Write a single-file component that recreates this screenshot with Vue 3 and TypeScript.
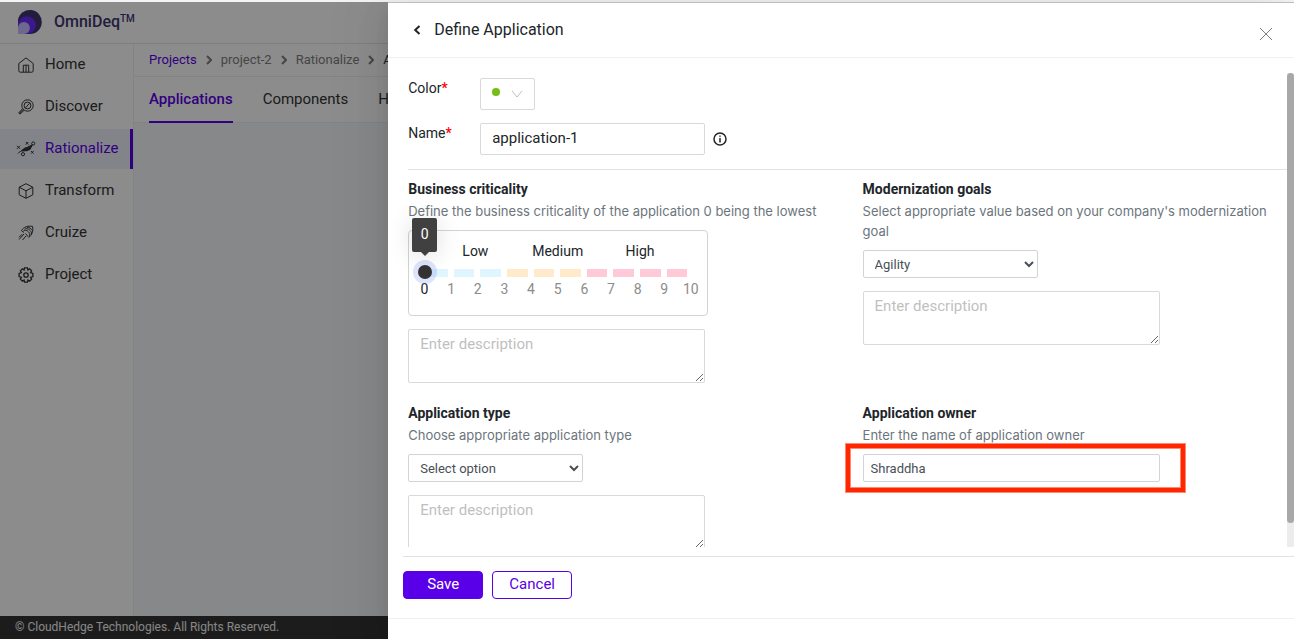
<script setup lang="ts">
import { ref } from 'vue'

interface NavItem {
  label: string
  icon: string
}

const navItems: NavItem[] = [
  { label: 'Home', icon: 'home' },
  { label: 'Discover', icon: 'discover' },
  { label: 'Rationalize', icon: 'rationalize' },
  { label: 'Transform', icon: 'transform' },
  { label: 'Cruize', icon: 'cruize' },
  { label: 'Project', icon: 'project' },
]
const activeNav = 'Rationalize'
const tabs: string[] = ['Applications', 'Components', 'Hosts']

const name = ref('application-1')
const criticality = ref(0)
const criticalityNote = ref('')
const goal = ref('Agility')
const goalNote = ref('')
const appType = ref('')
const appTypeNote = ref('')
const owner = ref('Shraddha')

const segments: string[] = ['low', 'low', 'low', 'medium', 'medium', 'medium', 'high', 'high', 'high', 'high']
const marks: number[] = Array.from({ length: 11 }, (_, i) => i)
</script>

<template>
  <div class="window">
    <div class="shell">
      <header class="topbar">
        <svg class="logo" viewBox="0 0 25 26" aria-hidden="true">
          <path d="M0 13V10A12.500 12.500 0 1 1 12.500 25H8z" fill="#3e3670" />
          <path d="M0 25V16A9.300 9.300 0 1 1 9.300 25z" fill="#6c2cff" />
          <path d="M0 25V19A6.200 6.200 0 1 1 6.200 25z" fill="#c6bfff" />
        </svg>
        <span class="brand">OmniDeq<sup>TM</sup></span>
      </header>

      <div class="workspace">
        <nav class="sidebar" aria-label="Main">
          <a
            v-for="item in navItems"
            :key="item.label"
            href="#"
            class="nav-item"
            :class="{ active: item.label === activeNav }"
          >
            <svg v-if="item.icon === 'home'" class="nav-icon" viewBox="0 0 16 16">
              <path d="M.8 6.500 8 .9l7.200 5.600v7.200a1.500 1.500 0 0 1-1.500 1.500H2.300a1.500 1.500 0 0 1-1.500-1.500zM5.300 15V8.200h5.400V15M8 8.200V15" />
            </svg>
            <svg v-else-if="item.icon === 'discover'" class="nav-icon" viewBox="0 0 16 16">
              <circle cx="9.500" cy="6.500" r="5.700" />
              <circle cx="9.500" cy="6.500" r="3.400" />
              <path d="m7.500 8.800 4-4.500M5.300 10.300l-4 4.200M4.400 9.800l-3.600 4 1.200 1.300 4-3.700" />
            </svg>
            <svg v-else-if="item.icon === 'rationalize'" class="nav-icon wide" viewBox="0 0 20 16">
              <path d="m1 4.800 3 3m0-3-3 3M9.800 1l2.600 2.600m0-2.600L9.800 3.600M15 10l2.600 2.600m0-2.600L15 12.600M2 12.500c3-4 6-1.500 9.500-4" />
              <path d="M5.500 9.500 9 7l2.500-.8 4.800-2.400-2.200 4.600-3.500 1.400z" fill="currentColor" />
              <circle cx="17.200" cy="2.500" r="1.600" />
              <circle cx="7" cy="13.200" r="1.600" />
            </svg>
            <svg v-else-if="item.icon === 'transform'" class="nav-icon" viewBox="0 0 16 16">
              <path d="M8 .7 14.800 4.200v7.600L8 15.300l-6.800-3.500V4.200zM1.200 4.200 8 7.800l6.800-3.600M8 7.800v7.500" />
            </svg>
            <svg v-else-if="item.icon === 'cruize'" class="nav-icon" viewBox="0 0 16 16">
              <path d="M3.400 5.400C6 2 9.500.6 14.500 1.400c1 4.300-.4 8.600-3.900 11.200M5 6.500C7 4.500 9 5 11 7.500c.8 1 .7 2.600.2 3.800M6.500 4.300C9 3 11 4 13 6.500c.5.8.6 2 .3 3M9 2.300c2 0 3.800 1 5.500 3M3.400 5.400l2.100 2.300M7.500 8.500l2.700 3.300M6 9l-5 5.500M4 9.300 1 12.300M8 11l-3.500 4" />
            </svg>
            <svg v-else class="nav-icon bold" viewBox="0 0 16 16">
              <circle cx="8" cy="8" r="2.200" />
              <path d="M6.600.9h2.800l.5 2 1.700-1 2 2-1 1.700 2.300.8v3.200l-2.300.8 1 1.700-2 2-1.700-1-.5 2H6.600l-.5-2-1.700 1-2-2 1-1.700-2.300-.8V6.400l2.300-.8-1-1.700 2-2 1.700 1z" />
            </svg>
            <span>{{ item.label }}</span>
          </a>
        </nav>

        <main class="main">
          <div class="breadcrumb">
            <a href="#">Projects</a>
            <svg class="crumb-sep" viewBox="0 0 6 10"><path d="m1 1 4 4-4 4" /></svg>
            <span>project-2</span>
            <svg class="crumb-sep" viewBox="0 0 6 10"><path d="m1 1 4 4-4 4" /></svg>
            <span>Rationalize</span>
            <svg class="crumb-sep" viewBox="0 0 6 10"><path d="m1 1 4 4-4 4" /></svg>
            <span class="current">Applications</span>
          </div>
          <div class="tabs">
            <button v-for="(tab, i) in tabs" :key="tab" type="button" class="tab" :class="{ active: i === 0 }">
              {{ tab }}
            </button>
          </div>
        </main>
      </div>

      <footer class="copyright">© CloudHedge Technologies. All Rights Reserved.</footer>
    </div>

    <div class="mask"></div>

    <section class="drawer" aria-labelledby="drawer-title">
      <header class="drawer-head">
        <button type="button" class="icon-button" aria-label="Back">
          <svg class="back-icon" viewBox="0 0 8 10"><path d="M6.500 1 2.200 5l4.300 4" /></svg>
        </button>
        <h1 id="drawer-title">Define Application</h1>
        <button type="button" class="icon-button close" aria-label="Close">
          <svg class="close-icon" viewBox="0 0 14 14"><path d="m1 1 12 12M13 1 1 13" /></svg>
        </button>
      </header>

      <div class="scroller">
        <form class="form" @submit.prevent>
          <div class="basics">
            <div class="line">
              <label for="color">Color<b>*</b></label>
              <button id="color" type="button" class="color-picker">
                <span class="swatch"></span>
                <svg class="chevron" viewBox="0 0 12 8"><path d="m1 1 5 6 5-6" /></svg>
              </button>
            </div>
            <div class="line">
              <label for="name">Name<b>*</b></label>
              <input id="name" v-model="name" type="text" class="name-input" />
              <svg class="info" viewBox="0 0 14 14">
                <circle cx="7" cy="7" r="6" />
                <path d="M7 6v4.500M7 3.400v1.400" />
              </svg>
            </div>
          </div>

          <div class="grid">
            <div class="field">
              <label class="title" for="criticality">Business criticality</label>
              <p>Define the business criticality of the application 0 being the lowest</p>
              <div class="slider">
                <div class="levels"><span>Low</span><span>Medium</span><span>High</span></div>
                <div class="rail">
                  <div class="segments">
                    <i v-for="(level, i) in segments" :key="i" :class="level"></i>
                  </div>
                  <input id="criticality" v-model.number="criticality" type="range" min="0" max="10" />
                  <output class="tip" for="criticality" :style="{ left: `calc(${criticality} * (100% - 14px) / 10 + 7px)` }">{{ criticality }}</output>
                </div>
                <div class="marks">
                  <span v-for="m in marks" :key="m" :class="{ on: m === criticality }">{{ m }}</span>
                </div>
              </div>
              <textarea v-model="criticalityNote" placeholder="Enter description" aria-label="Business criticality description"></textarea>
            </div>

            <div class="field">
              <label class="title" for="goal">Modernization goals</label>
              <p>Select appropriate value based on your company's modernization goal</p>
              <select id="goal" v-model="goal">
                <option>Agility</option>
              </select>
              <textarea v-model="goalNote" placeholder="Enter description" aria-label="Modernization goal description"></textarea>
            </div>

            <div class="field">
              <label class="title" for="type">Application type</label>
              <p>Choose appropriate application type</p>
              <select id="type" v-model="appType">
                <option value="">Select option</option>
              </select>
              <textarea v-model="appTypeNote" placeholder="Enter description" aria-label="Application type description"></textarea>
            </div>

            <div class="field">
              <label class="title" for="owner">Application owner</label>
              <p>Enter the name of application owner</p>
              <div class="highlighted">
                <input id="owner" v-model="owner" type="text" />
              </div>
            </div>
          </div>
        </form>
        <div class="scrollbar" aria-hidden="true"><div class="thumb"></div></div>
      </div>

      <div class="actions">
        <button type="button" class="btn primary">Save</button>
        <button type="button" class="btn">Cancel</button>
      </div>
      <div class="drawer-foot"></div>
    </section>
  </div>
</template>

<style>
body {
  margin: 0;
  overflow: hidden;
}
</style>

<style scoped>
*,
*::before,
*::after {
  box-sizing: border-box;
}
.window {
  position: relative;
  display: flex;
  flex-direction: column;
  height: 100vh;
  border-top: 2px solid #f4f4f4;
  font: 14px/22px Roboto, 'Open Sans', sans-serif;
  color: #212529;
  background: #fff;
}
button,
input,
select,
textarea {
  font: inherit;
  color: inherit;
  margin: 0;
}
a {
  text-decoration: none;
}
svg {
  fill: none;
  stroke: currentColor;
  flex: none;
}

/* Application shell */
.shell {
  flex: 1;
  min-height: 0;
  display: flex;
  flex-direction: column;
  border-top: 1px solid #fff;
}
.topbar {
  display: flex;
  align-items: center;
  gap: 12px;
  height: 41px;
  padding: 0 18px 2px;
  border-bottom: 1px solid #e4e6ea;
}
.logo {
  width: 24px;
  height: 25px;
  stroke: none;
}
.brand {
  font-size: 16px;
  font-weight: 500;
  color: #3e3670;
}
.brand sup {
  font-size: 10px;
  line-height: 10px;
  vertical-align: 5px;
}
.workspace {
  flex: 1;
  min-height: 0;
  display: flex;
}
.sidebar {
  flex: none;
  display: flex;
  flex-direction: column;
  gap: 2px;
  width: 134px;
  padding-top: 1px;
  border-right: 1px solid #eceef3;
}
.nav-item {
  display: flex;
  align-items: center;
  gap: 11px;
  height: 40px;
  padding-left: 18px;
  font-size: 15px;
  color: #333;
  border-right: 3px solid transparent;
}
.nav-item span {
  padding-bottom: 2px;
}
.nav-item.active {
  background: #eef0fb;
  border-color: #5a00e8;
}
.nav-item.active span {
  color: #5a00e8;
}
.nav-icon {
  width: 16px;
  height: 16px;
}
.nav-icon.wide {
  width: 20px;
  margin: 0 -2px;
}
.nav-icon.bold {
  stroke-width: 1.3;
}
.main {
  flex: 1;
  min-width: 0;
  background: #f4f7fb;
}
.breadcrumb {
  display: flex;
  align-items: center;
  gap: 9px;
  height: 33px;
  padding-left: 15px;
  font-size: 13px;
  white-space: nowrap;
  color: #808080;
  background: #fff;
  border-bottom: 1px solid #eceef3;
}
.breadcrumb a {
  color: #5a00e8;
}
.breadcrumb .current {
  color: #333;
}
.crumb-sep {
  width: 6px;
  height: 10px;
  stroke-width: 2;
}
.tabs {
  display: flex;
  gap: 30px;
  height: 46px;
  padding-left: 15px;
  background: #fff;
  border-bottom: 1px solid #eceef3;
}
.tab {
  height: 46px;
  padding: 0;
  font-size: 15px;
  color: #333;
  background: none;
  border: 0;
  border-bottom: 2px solid transparent;
}
.tab.active {
  font-weight: 500;
  color: #5a00e8;
  border-color: #5a00e8;
}
.copyright {
  height: 23px;
  padding-left: 15px;
  font-size: 12px;
  line-height: 23px;
  color: #f4f4f4;
  background: #333;
}
.mask {
  position: absolute;
  inset: 0;
  background: rgba(0, 0, 0, 0.45);
}

/* Drawer */
.drawer {
  position: absolute;
  top: 0;
  right: 0;
  bottom: 0;
  width: 70%;
  display: flex;
  flex-direction: column;
  border-top: 1px solid #bdbdbd;
  background: #fff;
  box-shadow: -6px 0 16px -8px rgba(0, 0, 0, 0.08), -9px 0 28px 0 rgba(0, 0, 0, 0.05),
    -12px 0 48px 16px rgba(0, 0, 0, 0.03);
}
.drawer-head {
  display: flex;
  align-items: center;
  gap: 12px;
  height: 55px;
  padding: 0 21px 0 24px;
  border-bottom: 1px solid #f0f0f0;
}
.drawer-head h1 {
  margin: 0;
  font-size: 16px;
  font-weight: 400;
}
.icon-button {
  display: flex;
  padding: 0;
  background: none;
  border: 0;
}
.back-icon {
  width: 10px;
  height: 10px;
  stroke-width: 2;
}
.close {
  margin-left: auto;
  padding-top: 8px;
  color: #808080;
}
.close-icon {
  width: 14px;
  height: 14px;
}
.scroller {
  flex: 1;
  min-height: 0;
  display: flex;
  margin-top: 15px;
  overflow: hidden;
}
.form {
  flex: 1;
  min-width: 0;
  padding-left: 20px;
}
.scrollbar {
  width: 7px;
  background: #ececec;
}
.thumb {
  height: 95%;
  border-radius: 4px;
  background: #a8a8a8;
}
.basics {
  display: flex;
  flex-direction: column;
  gap: 13px;
  padding: 5px 0 14px;
  border-bottom: 1px solid #e2e2e2;
}
.line {
  display: flex;
  align-items: center;
  height: 32px;
}
.line label {
  width: 72px;
  height: 32px;
  line-height: 20px;
}
.line b {
  font-weight: 500;
  color: #f00;
}
.color-picker {
  display: flex;
  align-items: center;
  justify-content: space-between;
  width: 55px;
  height: 32px;
  padding: 0 11px;
  background: #fff;
  border: 1px solid #d9d9d9;
  border-radius: 2px;
}
.swatch {
  width: 8px;
  height: 8px;
  margin-bottom: 5px;
  border-radius: 50%;
  background: #73bf13;
}
.chevron {
  width: 12px;
  height: 8px;
  color: #bfbfbf;
}
.name-input {
  width: 225px;
  height: 32px;
  padding: 0 11px 2px;
  font-size: 15px;
  background: #fff;
  border: 1px solid #d9d9d9;
  border-radius: 2px;
}
.info {
  width: 14px;
  height: 14px;
  margin-left: 8px;
  stroke-width: 1.5;
}
.grid {
  display: grid;
  grid-template-columns: 1fr 1fr;
  gap: 19px 30px;
  padding-top: 8px;
}
.field {
  display: flex;
  flex-direction: column;
  align-items: flex-start;
}
.title {
  font-size: 14px;
  font-weight: 700;
}
.field p {
  margin: 0;
  padding: 1px 0 9px;
  font-family: Inter, sans-serif;
  font-size: 13px;
  line-height: 20px;
  color: #6c757d;
}
.slider {
  width: 300px;
  height: 86px;
  padding-top: 9px;
  border: 1px solid #ced4da;
  border-radius: 4px;
}
.levels {
  display: grid;
  grid-template-columns: repeat(3, 1fr);
  padding: 0 26px 0 25px;
  text-align: center;
}
.rail {
  position: relative;
  height: 16px;
  margin: 2px 9px 0;
  padding: 5px 11px 0 9px;
}
.segments {
  display: grid;
  grid-template-columns: repeat(10, 1fr);
  gap: 6px;
}
.segments i {
  height: 8px;
}
.low {
  background: #e0f6ff;
}
.medium {
  background: #ffebcb;
}
.high {
  background: #ffc9d8;
}
.rail input {
  position: absolute;
  inset: 0;
  width: 100%;
  height: 16px;
  appearance: none;
  background: none;
}
.rail input::-webkit-slider-thumb {
  appearance: none;
  width: 14px;
  height: 14px;
  border-radius: 50%;
  background: #333;
  box-shadow: 0 0 0 5px rgba(90, 120, 240, 0.2);
}
.tip {
  position: absolute;
  bottom: 28px;
  width: 25px;
  height: 34px;
  margin-left: -13px;
  line-height: 32px;
  text-align: center;
  color: #fff;
  background: #404040;
  border-radius: 2px;
  box-shadow: 0 3px 24px rgba(0, 0, 0, 0.14);
}
.tip::after {
  content: '';
  position: absolute;
  top: 100%;
  left: 9px;
  border: 4px solid transparent;
  border-top-color: #404040;
  border-bottom: 0;
}
.marks {
  display: grid;
  grid-template-columns: repeat(11, 1fr);
  padding: 0 3px 0 2px;
  line-height: 18px;
  text-align: center;
  color: #8c8c8c;
}
.marks .on {
  color: #212529;
}
textarea {
  width: 297px;
  height: 54px;
  margin-top: 13px;
  padding: 3px 11px;
  font-size: 15px;
  background: #fff;
  border: 1px solid #d9d9d9;
  border-radius: 2px;
  resize: both;
}
textarea::placeholder {
  color: #bfbfbf;
}
select {
  width: 175px;
  height: 28px;
  padding: 0 7px;
  font-size: 13px;
  color: #495057;
  background: #fff;
  border: 1px solid #ced4da;
  border-radius: 2px;
}
.highlighted {
  position: relative;
  width: 297px;
}
.highlighted input {
  width: 100%;
  height: 28px;
  padding: 0 7px;
  font-size: 13px;
  color: #495057;
  background: #fff;
  border: 1px solid #ced4da;
  border-radius: 2px;
}
.highlighted::after {
  content: '';
  position: absolute;
  inset: -10px -25px -10px -17px;
  border: 4px solid #ff2600;
  box-shadow: 0 0 0 1px rgba(255, 38, 0, 0.55), inset 0 0 0 1px rgba(255, 38, 0, 0.55);
  pointer-events: none;
}
.actions {
  display: flex;
  gap: 9px;
  margin: 9px 0 0 15px;
  padding: 14px 0 19px;
  border-top: 1px solid #e2e2e2;
}
.btn {
  width: 80px;
  height: 28px;
  padding: 0 0 2px;
  font-size: 15px;
  color: #5a00e8;
  background: #fff;
  border: 1px solid #5a00e8;
  border-radius: 4px;
}
.btn.primary {
  color: #fff;
  background: #5a00e8;
}
.drawer-foot {
  height: 21px;
  border-top: 1px solid #f0f0f0;
}
</style>
